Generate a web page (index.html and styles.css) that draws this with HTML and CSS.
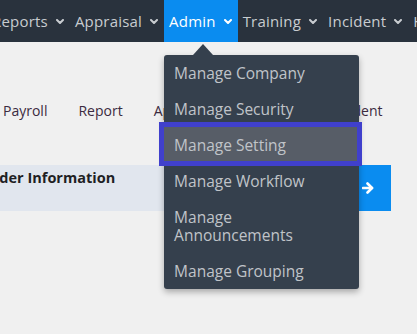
FILE: index.html
```html
<!DOCTYPE html>
<html>
<head>
<meta charset="utf-8">
<link rel="stylesheet" href="styles.css">
</head>
<body>
<nav class="topnav">
  <div class="nav-item">Reports <svg class="chev" viewBox="0 0 8 5"><polyline points="1,1 4,4 7,1"/></svg></div>
  <div class="nav-item">Appraisal <svg class="chev" viewBox="0 0 8 5"><polyline points="1,1 4,4 7,1"/></svg></div>
  <div class="nav-item active">Admin <svg class="chev" viewBox="0 0 8 5"><polyline points="1,1 4,4 7,1"/></svg>
    <div class="dropdown">
      <div class="dd-item">Manage Company</div>
      <div class="dd-item">Manage Security</div>
      <div class="dd-item selected">Manage Setting</div>
      <div class="dd-item">Manage Workflow</div>
      <div class="dd-item">Manage<br>Announcements</div>
      <div class="dd-item">Manage Grouping</div>
    </div>
  </div>
  <div class="nav-item">Training <svg class="chev" viewBox="0 0 8 5"><polyline points="1,1 4,4 7,1"/></svg></div>
  <div class="nav-item">Incident <svg class="chev" viewBox="0 0 8 5"><polyline points="1,1 4,4 7,1"/></svg></div>
  <div class="nav-item">Help</div>
</nav>
<main class="content">
  <div class="subnav">
    <span class="sub-item">Payroll</span>
    <span class="sub-item">Report</span>
    <span class="sub-item">Appraisal</span>
    <span class="sub-item">Training</span>
    <span class="sub-item">Incident</span>
  </div>
  <div class="info-row">
    <div class="info-bar"><span class="info-title">Provider Information</span></div>
    <div class="info-btn">
      <svg viewBox="0 0 12 12" class="arrow"><line x1="1" y1="6" x2="10" y2="6"/><polyline points="5.5,1.5 10,6 5.5,10.5"/></svg>
    </div>
  </div>
</main>
</body>
</html>
```

FILE: styles.css
```css
*, *::before, *::after { box-sizing: border-box; }
html, body { margin: 0; padding: 0; }
body {
  background: #f0f0f0;
  font-family: "Open Sans", "Liberation Sans", sans-serif;
  width: 417px;
  height: 334px;
  overflow: hidden;
}
.topnav {
  display: flex;
  height: 42px;
  background: #29323d;
  margin-left: -13px;
  white-space: nowrap;
}
.nav-item {
  position: relative;
  display: flex;
  align-items: center;
  gap: 8px;
  padding: 0 6px 0 5px;
  color: #c8ccd0;
  font-size: 15px;
  letter-spacing: 0.2px;
  height: 42px;
}
.nav-item.active {
  background: #0a8cf0;
  color: #ffffff;
}
.chev {
  width: 8px;
  height: 5px;
  fill: none;
  stroke: currentColor;
  stroke-width: 2;
  stroke-linecap: round;
  stroke-linejoin: round;
}
.dropdown {
  position: absolute;
  top: 55px;
  left: 0;
  width: 195px;
  background: #35404d;
  border-radius: 3px;
  box-shadow: 0 3px 6px rgba(0,0,0,0.3);
  z-index: 10;
  white-space: normal;
  letter-spacing: 0;
}
.dropdown::before {
  content: "";
  position: absolute;
  top: -11px;
  left: 29px;
  border-left: 10px solid transparent;
  border-right: 10px solid transparent;
  border-bottom: 11px solid #35404d;
  box-sizing: content-box;
}
.dd-item {
  position: relative;
  padding: 9px 10px;
  line-height: 18px;
  color: #c0c4c9;
  font-size: 15.5px;
}
.dd-item.selected { z-index: 1; }
.dd-item.selected::before {
  content: "";
  position: absolute;
  left: -5px;
  top: -5px;
  width: 203px;
  height: 44px;
  border: 5px solid #4040cc;
  background: #575d67;
  z-index: -1;
}
.content {
  padding-top: 59px;
}
.subnav {
  display: flex;
  gap: 31px;
  padding-left: 3px;
  height: 20px;
  line-height: 20px;
  font-size: 14px;
  color: #3b2b40;
}
.info-row {
  display: flex;
  margin-top: 44px;
  height: 46px;
}
.info-bar {
  width: 359px;
  background: #e1e6ee;
  padding-top: 1px;
  overflow: hidden;
  white-space: nowrap;
}
.info-title {
  display: inline-block;
  margin-left: -38px;
  font-weight: 700;
  font-size: 14.5px;
  line-height: 20px;
  color: #1f1f24;
}
.info-btn {
  width: 32px;
  background: #0a8cf0;
  display: flex;
  align-items: center;
  padding-left: 3px;
}
.arrow {
  width: 12px;
  height: 12px;
  fill: none;
  stroke: #ffffff;
  stroke-width: 2.6;
  stroke-linecap: round;
  stroke-linejoin: round;
}
```
